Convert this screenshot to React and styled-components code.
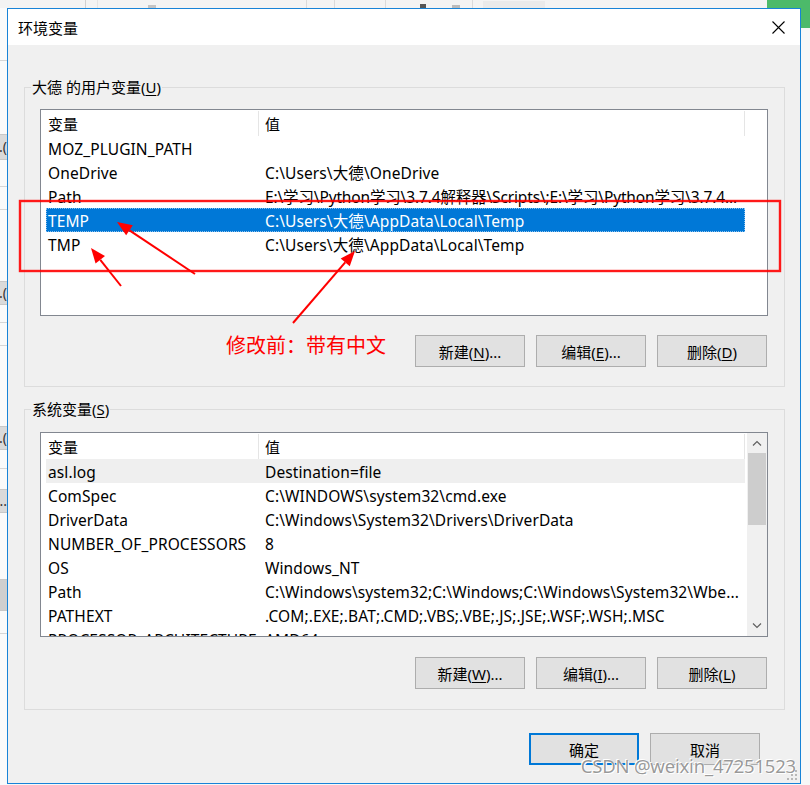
import styled, { createGlobalStyle } from "styled-components";

const GlobalStyle = createGlobalStyle`
  html, body {
    margin: 0;
    padding: 0;
    background: #f7f7f7;
  }
  * {
    box-sizing: border-box;
  }
`;

const FONT = `"Noto Sans", "Noto Sans CJK SC", sans-serif`;

const Desktop = styled.div`
  position: relative;
  width: 810px;
  height: 785px;
  overflow: hidden;
  background: #f7f7f7;
  font-family: ${FONT};
  color: #000;
`;

/* background window pieces peeking out around the dialog */
const BackToolbar = styled.div`
  position: absolute;
  left: 0;
  top: 0;
  width: 810px;
  height: 8px;
  display: flex;
  align-items: flex-end;
  background: #f3f3f3;
`;

const ToolMark = styled.span`
  display: block;
  width: ${(p) => p.$w || 1}px;
  height: ${(p) => p.$h || 8}px;
  margin-left: ${(p) => p.$ml}px;
  background: ${(p) => p.$c || "#d8d8d8"};
`;

const GreenButton = styled.div`
  margin-left: auto;
  width: 43px;
  height: 28px;
  align-self: flex-start;
  background: #4cba6a;
`;

const BackLeft = styled.div`
  position: absolute;
  left: 0;
  top: 8px;
  width: 7px;
  height: 777px;
  display: flex;
  flex-direction: column;
  background: #fafafa;
`;

const LeftPiece = styled.div`
  flex-shrink: 0;
  height: ${(p) => p.$h}px;
  margin-top: ${(p) => p.$mt}px;
  background: ${(p) => p.$c || "#dadada"};
  border-top: 1px solid #c8c8c8;
  border-bottom: 1px solid #c8c8c8;
  font-size: 14px;
  line-height: ${(p) => p.$h - 2}px;
  overflow: hidden;
  white-space: nowrap;
  direction: rtl;
  color: #333;
`;

const LeftLine = styled.div`
  flex-shrink: 0;
  height: 1px;
  margin-top: ${(p) => p.$mt}px;
  background: #d6d6d6;
`;

const Dialog = styled.div`
  position: absolute;
  left: 7px;
  top: 8px;
  width: 794px;
  height: 776px;
  border: 1px solid #1883d7;
  background: #f0f0f0;
  display: flex;
  flex-direction: column;
`;

const TitleBar = styled.div`
  height: 36px;
  background: #fff;
  display: flex;
  align-items: center;
  justify-content: space-between;
  padding: 0 15px 0 10px;
  font-size: 15px;
`;

const Body = styled.div`
  flex: 1;
  display: flex;
  flex-direction: column;
  padding: 32px 15px 0 16px;
`;

const Group = styled.fieldset`
  margin: ${(p) => p.$mt || 0}px 0 0 0;
  min-width: 0;
  border: 1px solid #dcdcdc;
  padding: ${(p) => p.$pt}px 16px ${(p) => p.$pb}px 15px;
  display: flex;
  flex-direction: column;
`;

const Legend = styled.legend`
  font-size: 15px;
  line-height: 20px;
  height: 20px;
  padding: 0 1px;
  margin-left: -9px;
`;

const Key = styled.span`
  text-decoration: underline;
  text-underline-offset: 2px;
`;

const ListBox = styled.div`
  height: ${(p) => p.$h}px;
  border: 1px solid #828790;
  background: #fff;
  display: flex;
  overflow: hidden;
`;

const ListContent = styled.div`
  width: 704px;
  padding-left: 5px;
  display: flex;
  flex-direction: column;
`;

const HeaderRow = styled.div`
  height: 26px;
  flex-shrink: 0;
  display: grid;
  grid-template-columns: 213px 486px;
  align-items: center;
  font-size: 15px;
`;

const HeaderCell = styled.div`
  height: 25px;
  margin-top: 1px;
  display: flex;
  align-items: center;
  padding-left: ${(p) => p.$pl}px;
  border-right: 1px solid #e5e5e5;
`;

const Row = styled.div`
  height: 24px;
  flex-shrink: 0;
  display: grid;
  grid-template-columns: 219px 480px;
  align-items: center;
  font-size: 15.5px;
  letter-spacing: 0.1px;
  white-space: nowrap;
  color: ${(p) => (p.$selected ? "#fff" : "#000")};
  background: ${(p) =>
    p.$selected ? "#0078d7" : p.$hover ? "#efefef" : "transparent"};
  outline: ${(p) => (p.$selected ? "1px dotted #8ec2ee" : "none")};
  outline-offset: -1px;
`;

const Cell = styled.div`
  padding-left: ${(p) => p.$pl || 0}px;
  padding-top: 1px;
  overflow: hidden;
  letter-spacing: ${(p) => (p.$tight ? "-0.15px" : "inherit")};
`;

const ScrollBar = styled.div`
  width: 20px;
  margin-left: auto;
  background: #f0f0f0;
  display: flex;
  flex-direction: column;
  align-items: center;
`;

const ScrollArrow = styled.div`
  height: 20px;
  width: 100%;
  display: flex;
  align-items: center;
  justify-content: center;
  margin-top: ${(p) => (p.$down ? "auto" : "0")};
`;

const Thumb = styled.div`
  width: 18px;
  height: 72px;
  background: #cdcdcd;
`;

const ButtonRow = styled.div`
  display: flex;
  justify-content: flex-end;
  align-items: flex-start;
  gap: 11px;
  margin-top: ${(p) => p.$mt}px;
  margin-right: ${(p) => p.$mr || 1}px;
`;

const Button = styled.button`
  width: 110px;
  height: 32px;
  padding: 0;
  margin: 0;
  background: #e1e1e1;
  border: ${(p) => (p.$default ? "2px solid #0078d7" : "1px solid #adadad")};
  font-family: ${FONT};
  font-size: 15px;
  color: #000;
`;

const Note = styled.div`
  font-family: "Noto Sans CJK SC", sans-serif;
  font-size: 20px;
  line-height: 20px;
  color: #ff0000;
  margin-right: 18px;
`;

const Footer = styled.div`
  display: flex;
  justify-content: flex-end;
  gap: 11px;
  margin-top: 23px;
  padding-right: 25px;
`;

const Overlay = styled.svg`
  position: absolute;
  left: 0;
  top: 0;
  pointer-events: none;
`;

const Watermark = styled.div`
  position: absolute;
  right: 14px;
  top: 753px;
  font-family: "Noto Sans", sans-serif;
  font-size: 18.5px;
  letter-spacing: -0.2px;
  color: rgba(120, 120, 120, 0.75);
  text-shadow: 0 0 1px #fff, 1px 1px 0 #fff, -1px -1px 0 #fff;
`;

const Grip = styled.svg`
  position: absolute;
  right: 12px;
  bottom: 4px;
`;

const userVars = [
  { name: "MOZ_PLUGIN_PATH", value: "" },
  { name: "OneDrive", value: "C:\\Users\\大德\\OneDrive" },
  {
    name: "Path",
    value:
      "E:\\学习\\Python学习\\3.7.4解释器\\Scripts\\;E:\\学习\\Python学习\\3.7.4...",
    tight: true,
  },
  { name: "TEMP", value: "C:\\Users\\大德\\AppData\\Local\\Temp", selected: true },
  { name: "TMP", value: "C:\\Users\\大德\\AppData\\Local\\Temp" },
];

const sysVars = [
  { name: "asl.log", value: "Destination=file", hover: true },
  { name: "ComSpec", value: "C:\\WINDOWS\\system32\\cmd.exe" },
  { name: "DriverData", value: "C:\\Windows\\System32\\Drivers\\DriverData" },
  { name: "NUMBER_OF_PROCESSORS", value: "8" },
  { name: "OS", value: "Windows_NT" },
  {
    name: "Path",
    value: "C:\\Windows\\system32;C:\\Windows;C:\\Windows\\System32\\Wbe...",
  },
  { name: "PATHEXT", value: ".COM;.EXE;.BAT;.CMD;.VBS;.VBE;.JS;.JSE;.WSF;.WSH;.MSC" },
  { name: "PROCESSOR_ARCHITECTURE", value: "AMD64" },
];

const VarList = ({ rows, height, scroll }) => (
  <ListBox $h={height}>
    <ListContent>
      <HeaderRow>
        <HeaderCell $pl={2}>变量</HeaderCell>
        <HeaderCell $pl={6}>值</HeaderCell>
      </HeaderRow>
      {rows.map((r, i) => (
        <Row key={i} $selected={r.selected} $hover={r.hover}>
          <Cell $pl={2}>{r.name}</Cell>
          <Cell $tight={r.tight}>{r.value}</Cell>
        </Row>
      ))}
    </ListContent>
    {scroll && (
      <ScrollBar>
        <ScrollArrow>
          <svg width="10" height="6" viewBox="0 0 10 6">
            <path d="M1 5.5 L5 1.5 L9 5.5" fill="none" stroke="#606060" strokeWidth="1.2" />
          </svg>
        </ScrollArrow>
        <Thumb />
        <ScrollArrow $down>
          <svg width="10" height="6" viewBox="0 0 10 6">
            <path d="M1 0.5 L5 4.5 L9 0.5" fill="none" stroke="#606060" strokeWidth="1.2" />
          </svg>
        </ScrollArrow>
      </ScrollBar>
    )}
  </ListBox>
);

// red annotation arrow: line plus filled head at (x2, y2)
const Arrow = ({ x1, y1, x2, y2 }) => {
  const a = Math.atan2(y2 - y1, x2 - x1);
  const len = 15;
  const w = 6;
  const bx = x2 - len * Math.cos(a);
  const by = y2 - len * Math.sin(a);
  const px = -Math.sin(a) * w;
  const py = Math.cos(a) * w;
  return (
    <g>
      <line x1={x1} y1={y1} x2={bx} y2={by} stroke="#f00" strokeWidth="2" />
      <polygon
        points={`${x2},${y2} ${bx + px},${by + py} ${bx - px},${by - py}`}
        fill="#f00"
      />
    </g>
  );
};

export default function App() {
  return (
    <Desktop>
      <GlobalStyle />
      <BackToolbar>
        <ToolMark $ml={85} $c="#d0d0d0" />
        <ToolMark $ml={11} $c="#e4e4e4" />
        <ToolMark $ml={50} $w={8} $h={3} $c="#c4c4c4" />
        <ToolMark $ml={150} $c="#dadada" />
        <ToolMark $ml={27} $c="#dadada" />
        <ToolMark $ml={50} $c="#dadada" />
        <ToolMark $ml={34} $w={6} $h={4} $c="#555" />
        <ToolMark $ml={26} $w={8} $h={3} $c="#bbb" />
        <ToolMark $ml={12} $c="#dadada" />
        <ToolMark $ml={10} $w={62} $h={7} $c="#eaeaea" />
        <GreenButton />
      </BackToolbar>
      <BackLeft>
        <LeftLine $mt={52} />
        <LeftPiece $mt={73} $h={26}>).</LeftPiece>
        <LeftLine $mt={26} />
        <LeftLine $mt={22} />
        <LeftPiece $mt={71} $h={24}>).</LeftPiece>
        <LeftLine $mt={17} />
        <LeftLine $mt={22} />
        <LeftPiece $mt={80} $h={24}>).</LeftPiece>
        <LeftLine $mt={18} />
        <LeftPiece $mt={20} $h={24}>...</LeftPiece>
        <LeftPiece $mt={66} $h={32} $c="#cfcfcf" />
        <LeftLine $mt={22} />
      </BackLeft>

      <Dialog>
        <TitleBar>
          <span>环境变量</span>
          <svg width="13" height="13" viewBox="0 0 13 13">
            <path d="M0.5 0.5 L12.5 12.5 M12.5 0.5 L0.5 12.5" stroke="#000" strokeWidth="1.1" />
          </svg>
        </TitleBar>
        <Body>
          <Group $pt={12} $pb={19}>
            <Legend>
              大德 的用户变量(<Key>U</Key>)
            </Legend>
            <VarList rows={userVars} height={207} />
            <ButtonRow $mt={19}>
              <Note>修改前：带有中文</Note>
              <Button>
                新建(<Key>N</Key>)...
              </Button>
              <Button>
                编辑(<Key>E</Key>)...
              </Button>
              <Button>
                删除(<Key>D</Key>)
              </Button>
            </ButtonRow>
          </Group>
          <Group $mt={12} $pt={13} $pb={20}>
            <Legend>
              系统变量(<Key>S</Key>)
            </Legend>
            <VarList rows={sysVars} height={205} scroll />
            <ButtonRow $mt={20}>
              <Button>
                新建(<Key>W</Key>)...
              </Button>
              <Button>
                编辑(<Key>I</Key>)...
              </Button>
              <Button>
                删除(<Key>L</Key>)
              </Button>
            </ButtonRow>
          </Group>
          <Footer>
            <Button $default>确定</Button>
            <Button>取消</Button>
          </Footer>
        </Body>
      </Dialog>

      <Overlay width="810" height="785" viewBox="0 0 810 785">
        <rect x="20" y="201" width="760" height="70" fill="none" stroke="#f00" strokeWidth="2.4" opacity="0.9" />
        <Arrow x1={195} y1={274} x2={117} y2={222} />
        <Arrow x1={121} y1={286} x2={91} y2={248} />
        <Arrow x1={293} y1={323} x2={355} y2={251} />
      </Overlay>

      <Watermark>CSDN @weixin_47251523</Watermark>
      <Grip width="11" height="11" viewBox="0 0 11 11">
        {[
          [8, 0],
          [4, 4],
          [8, 4],
          [0, 8],
          [4, 8],
          [8, 8],
        ].map(([x, y], i) => (
          <rect key={i} x={x} y={y} width="2" height="2" fill="#b8b8b8" />
        ))}
      </Grip>
    </Desktop>
  );
}
